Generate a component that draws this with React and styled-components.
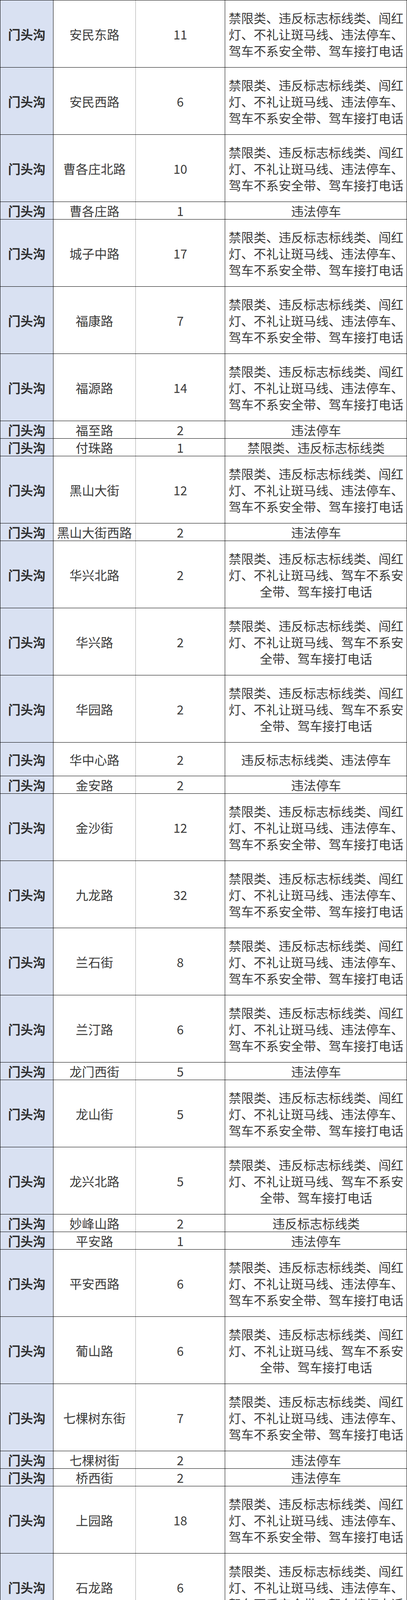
import styled, { createGlobalStyle } from 'styled-components'

const GlobalStyle = createGlobalStyle`
  html, body {
    margin: 0;
    padding: 0;
    background: #ffffff;
  }
`

const FULL = '禁限类、违反标志标线类、闯红灯、不礼让斑马线、违法停车、驾车不系安全带、驾车接打电话'
const NO_PARK = '禁限类、违反标志标线类、闯红灯、不礼让斑马线、驾车不系安全带、驾车接打电话'
const NO_ZEBRA = '禁限类、违反标志标线类、闯红灯、驾车不系安全带、驾车接打电话'
const PARK = '违法停车'
const SIGN_PARK = '违反标志标线类、违法停车'
const SIGN = '违反标志标线类'

// row heights, in px, as the spreadsheet rows were sized
const H = { tall: 172, single: 45, double: 86, mid: 129 }

const rows = [
  ['安民东路', 11, FULL, 'tall'],
  ['安民西路', 6, FULL, 'tall'],
  ['曹各庄北路', 10, FULL, 'tall'],
  ['曹各庄路', 1, PARK, 'single'],
  ['城子中路', 17, FULL, 'tall'],
  ['福康路', 7, FULL, 'tall'],
  ['福源路', 14, FULL, 'tall'],
  ['福至路', 2, PARK, 'single'],
  ['付珠路', 1, '禁限类、违反标志标线类', 'single'],
  ['黑山大街', 12, FULL, 'tall'],
  ['黑山大街西路', 2, PARK, 'single'],
  ['华兴北路', 2, NO_PARK, 'tall'],
  ['华兴路', 2, NO_PARK, 'tall'],
  ['华园路', 2, NO_PARK, 'tall'],
  ['华中心路', 2, SIGN_PARK, 'double'],
  ['金安路', 2, PARK, 'single'],
  ['金沙街', 12, FULL, 'tall'],
  ['九龙路', 32, FULL, 'tall'],
  ['兰石街', 8, FULL, 'tall'],
  ['兰汀路', 6, FULL, 'tall'],
  ['龙门西街', 5, PARK, 'single'],
  ['龙山街', 5, FULL, 'tall'],
  ['龙兴北路', 5, NO_PARK, 'tall'],
  ['妙峰山路', 2, SIGN, 'single'],
  ['平安路', 1, PARK, 'single'],
  ['平安西路', 6, FULL, 'tall'],
  ['葡山路', 6, NO_PARK, 'tall'],
  ['七棵树东街', 7, FULL, 'tall'],
  ['七棵树街', 2, PARK, 'single'],
  ['桥西街', 2, PARK, 'single'],
  ['上园路', 18, FULL, 'tall'],
  ['石龙路', 6, FULL, 'tall'],
  ['双杏路', 4, NO_PARK, 'tall'],
  ['石担路', 2, '不礼让斑马线', 'single'],
  ['泰安北路', 2, NO_PARK, 'tall'],
  ['泰安路', 6, FULL, 'tall'],
  ['泰安南路', 2, NO_PARK, 'tall'],
  ['西苑路', 4, NO_PARK, 'tall'],
  ['斜井路', 1, PARK, 'single'],
  ['新城大街', 8, NO_PARK, 'tall'],
  ['新城东街', 3, FULL, 'tall'],
  ['新桥西街', 2, PARK, 'single'],
  ['新桥西街东路', 2, SIGN_PARK, 'double'],
  ['银盛南路', 4, NO_ZEBRA, 'mid'],
  ['永安路', 4, NO_ZEBRA, 'mid'],
  ['玉带街', 20, FULL, 'tall'],
  ['增产路', 4, NO_ZEBRA, 'mid'],
  ['政法路东延', 2, PARK, 'single'],
  ['中门寺街东路', 1, PARK, 'single'],
  ['紫金北路', 7, FULL, 'tall'],
  ['紫金路', 9, FULL, 'tall'],
  ['门头沟北路', 13, FULL, 'tall'],
  ['福泰路', 1, PARK, 'single'],
  ['耿王路', 1, PARK, 'single'],
  ['和平南街', 1, PARK, 'single'],
  ['增北路', 20, FULL, 'tall'],
  ['和平街', 2, NO_PARK, 'tall'],
  ['门头沟路', 4, NO_PARK, 'tall'],
  ['六环路', 4, SIGN, 'single'],
  ['京蔚高速', 6, '排放超标', 'single'],
]

const Sheet = styled.div`
  width: 1043px;
  box-sizing: border-box;
  border-top: 1px solid #000;
  border-left: 1px solid #000;
  font-family: "Noto Sans CJK SC", "Microsoft YaHei", sans-serif;
`

const Row = styled.div`
  display: grid;
  grid-template-columns: 136px 211px 229px 1fr;
  grid-template-rows: 100%;
  height: ${({ $h }) => $h}px;
  box-sizing: border-box;
  border-bottom: 1px solid #000;
`

const Cell = styled.div`
  display: flex;
  align-items: center;
  justify-content: center;
  min-height: 0;
  text-align: center;
  box-sizing: border-box;
  border-right: 1px solid #000;
  font-size: 32px;
  line-height: 42px;
  color: #3b3b3b;
`

const District = styled(Cell)`
  background: #d9e1f2;
  font-weight: 700;
  color: #303030;
  white-space: nowrap;
`

const Road = styled(Cell)`
  white-space: nowrap;
  border-right-color: #a0a0a0;
`

const Count = styled(Cell)``

const Kind = styled(Cell)`
  padding: 0 5px 0 6px;
`

export default function App() {
  return (
    <>
      <GlobalStyle />
      <Sheet>
        {rows.map(([road, count, kind, size]) => (
          <Row key={road} $h={H[size]}>
            <District>门头沟</District>
            <Road>{road}</Road>
            <Count>{count}</Count>
            <Kind>{kind}</Kind>
          </Row>
        ))}
      </Sheet>
    </>
  )
}
